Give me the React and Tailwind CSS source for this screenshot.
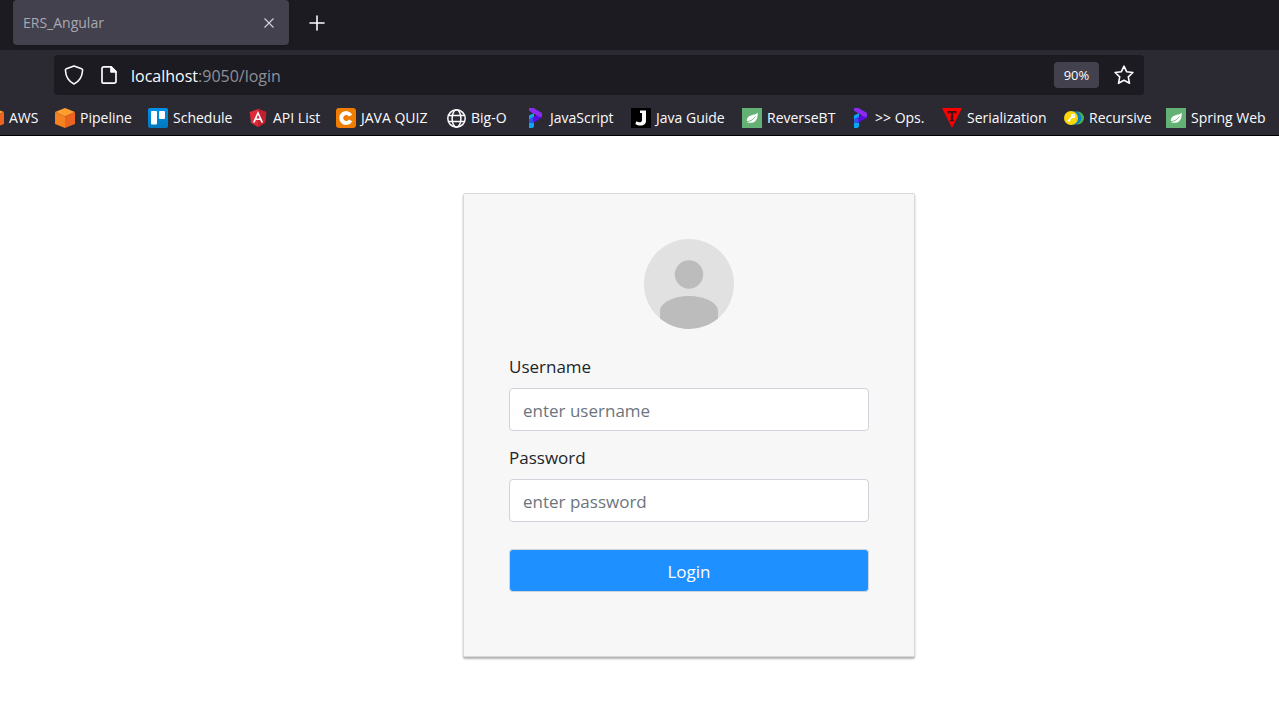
import React from "react";

function CubeIcon() {
  return (
    <svg viewBox="0 0 20 20" className="size-5 shrink-0" aria-hidden="true">
      <path d="M10 0 20 4 10 8.4 0 4Z" fill="#ff9d2e" />
      <path d="M0 4 10 8.4V20L0 16Z" fill="#f58220" />
      <path d="M20 4 10 8.4V20L20 16Z" fill="#ec6420" />
    </svg>
  );
}

function BoardIcon() {
  return (
    <svg viewBox="0 0 20 20" className="size-5 shrink-0" aria-hidden="true">
      <defs>
        <linearGradient id="board" x1="0" y1="0" x2="0" y2="1">
          <stop offset="0" stopColor="#0091e6" />
          <stop offset="1" stopColor="#0079bf" />
        </linearGradient>
      </defs>
      <rect width="20" height="20" rx="2" fill="url(#board)" />
      <rect x="3" y="3" width="6" height="13.5" rx="1" fill="#fff" />
      <rect x="11" y="3" width="6" height="8" rx="1" fill="#fff" />
    </svg>
  );
}

function AngularIcon() {
  return (
    <svg viewBox="0 0 20 20" className="size-5 shrink-0" aria-hidden="true">
      <path d="M10 1 18.3 4 17 15 10 19 3 15 1.7 4Z" fill="#dd2c3a" />
      <path d="M10 1 18.3 4 17 15 10 19Z" fill="#c3202f" />
      <path
        d="M10 3 4.8 14.6H6.8L7.8 12H12.2L13.2 14.6H15.2ZM10 6.6 11.5 10.4H8.5Z"
        fill="#fff"
        fillRule="evenodd"
      />
    </svg>
  );
}

function QuizIcon() {
  return (
    <svg viewBox="0 0 20 20" className="size-5 shrink-0" aria-hidden="true">
      <rect width="20" height="20" rx="3" fill="#f07c00" />
      <path
        d="M14.6 7.6A5 5 0 1 0 14.6 12.4"
        fill="none"
        stroke="#fff"
        strokeWidth="4"
      />
    </svg>
  );
}

function GlobeIcon() {
  return (
    <svg
      viewBox="0 0 20 20"
      className="size-5 shrink-0"
      fill="none"
      stroke="#fbfbfe"
      strokeWidth="1.5"
      aria-hidden="true"
    >
      <circle cx="10.5" cy="10.5" r="8.7" />
      <ellipse cx="10.5" cy="10.5" rx="4.4" ry="8.7" />
      <path d="M2.6 7.4H18.4M2.6 13.6H18.4" />
    </svg>
  );
}

function RibbonIcon() {
  return (
    <svg viewBox="0 0 20 20" className="size-5 shrink-0" aria-hidden="true">
      <path d="M4 7.5 9 5V18.500L7.500 20H4Z" fill="#0aa5f5" />
      <path d="M4 11.500 13 6.500 17 6V9.500L8.500 14.800 4 15Z" fill="#5a0be0" />
      <path d="M4 11.200V15L8.300 14.800V9.500Z" fill="#2f55e8" />
      <path d="M4 0H8.500L17 5V8.500L14.500 9 4 2.800Z" fill="#8a2cf0" />
    </svg>
  );
}

function HookIcon() {
  return (
    <svg viewBox="0 0 20 20" className="size-5 shrink-0" aria-hidden="true">
      <rect width="20" height="20" fill="#000" />
      <path
        d="M9 2.500H15V12.500C15 16 13 17.500 9.500 17.500 7 17.500 5.200 16.800 4.300 16L5.400 13.300C8 14.800 11 14.800 11 12V5H9Z"
        fill="#fff"
      />
    </svg>
  );
}

function LeafIcon() {
  return (
    <svg viewBox="0 0 20 20" className="size-5 shrink-0" aria-hidden="true">
      <rect width="20" height="20" fill="#63b175" />
      <path
        d="M15.600 4.600C16 8 15.200 11.500 13 13.500 10.800 15.300 7.500 15 5.300 14.400 4.500 12.500 4.700 10.300 6.500 8.700 9 6.600 13.600 7.500 15.600 4.600Z"
        fill="#fff"
      />
      <path d="M4.800 13.800C8.500 13.200 11.500 11.300 13.300 8.600" fill="none" stroke="#63b175" strokeWidth="0.900" />
    </svg>
  );
}

function TriangleIcon() {
  return (
    <svg viewBox="0 0 20 20" className="size-5 shrink-0" aria-hidden="true">
      <path d="M0 0H20L10 20Z" fill="#fe0000" />
      <path d="M5.500 3H14.500V5.800H13.200V4.800H11.200V12H12V13.200H8V12H8.800V4.800H6.800V5.800H5.500Z" fill="#3a1218" />
    </svg>
  );
}

function KeyIcon() {
  return (
    <svg viewBox="0 0 20 20" className="size-5 shrink-0" aria-hidden="true">
      <circle cx="13.500" cy="10" r="6.500" fill="#4caf50" />
      <circle cx="10.500" cy="10" r="6.700" fill="#0b7fc4" />
      <circle cx="7" cy="10" r="7" fill="#fbd60a" />
      <circle cx="9" cy="8" r="2.300" fill="#fff" />
      <path d="M8 9 3.800 13.200M5 12 6.200 13.200" stroke="#fff" strokeWidth="1.500" />
      <circle cx="9.600" cy="7.400" r="0.700" fill="#fbd60a" />
    </svg>
  );
}

const bookmarks = [
  { label: "AWS", Icon: CubeIcon, width: "w-[71px]" },
  { label: "Pipeline", Icon: CubeIcon, width: "w-[93px]" },
  { label: "Schedule", Icon: BoardIcon, width: "w-[100px]" },
  { label: "API List", Icon: AngularIcon, width: "w-[88px]" },
  { label: "JAVA QUIZ", Icon: QuizIcon, width: "w-[110px]" },
  { label: "Big-O", Icon: GlobeIcon, width: "w-[79px]" },
  { label: "JavaScript", Icon: RibbonIcon, width: "w-[106px]" },
  { label: "Java Guide", Icon: HookIcon, width: "w-[111px]" },
  { label: "ReverseBT", Icon: LeafIcon, width: "w-[108px]" },
  { label: ">> Ops.", Icon: RibbonIcon, width: "w-[92px]" },
  { label: "Serialization", Icon: TriangleIcon, width: "w-[122px]" },
  { label: "Recursive", Icon: KeyIcon, width: "w-[102px]" },
  { label: "Spring Web", Icon: LeafIcon, width: "w-[113px]" },
];

function TabStrip() {
  return (
    <div className="flex h-[50px] items-start bg-[#1c1b22] pl-[13px]">
      <div className="flex h-[45px] w-[276px] items-center justify-between rounded bg-[#42414d] pl-[10px] pr-3 shadow">
        <span className="text-sm text-[#a9a8b3]">ERS_Angular</span>
        <button type="button" aria-label="Close tab" className="flex size-4 items-center justify-center">
          <svg viewBox="0 0 10 10" className="size-[10px]" stroke="#d5d4dc" strokeWidth="1.100" aria-hidden="true">
            <path d="M0.500 0.500 9.500 9.500M9.500 0.500 0.500 9.500" />
          </svg>
        </button>
      </div>
      <button type="button" aria-label="New tab" className="ml-4 flex h-[45px] w-6 items-center justify-center">
        <svg viewBox="0 0 16 16" className="size-4" stroke="#fbfbfe" strokeWidth="1.600" strokeLinecap="round" aria-hidden="true">
          <path d="M8 1V15M1 8H15" />
        </svg>
      </button>
    </div>
  );
}

function AddressBar() {
  return (
    <div className="flex h-[50px] items-center pl-[54px] pr-[135px]">
      <div className="flex h-10 grow items-center rounded bg-[#1c1b22] pl-[10px] pr-[10px]">
        <svg viewBox="0 0 20 20" className="size-5 shrink-0" fill="none" stroke="#fbfbfe" strokeWidth="1.600" strokeLinejoin="round" aria-hidden="true">
          <path d="M10 0.900 17.600 3.700C18.400 4 18.700 4.500 18.600 5.300 18.200 11.500 15.500 16.500 10 19 4.500 16.500 1.800 11.500 1.400 5.300 1.300 4.500 1.600 4 2.400 3.700Z" />
        </svg>
        <svg viewBox="0 0 16 20" className="ml-[17px] h-5 w-4 shrink-0" fill="none" stroke="#fbfbfe" strokeWidth="1.700" strokeLinejoin="round" aria-hidden="true">
          <path d="M10 1.800H2.800A1.800 1.800 0 0 0 1 3.600V16.400A1.800 1.800 0 0 0 2.800 18.200H13.200A1.800 1.800 0 0 0 15 16.400V6.800Z" />
          <path d="M10 1.800V6.800H15Z" fill="#fbfbfe" />
        </svg>
        <div className="ml-[14px] grow pt-0.5 text-base text-[#8f8f98]">
          <span className="text-[#fbfbfe]">localhost</span>:9050/login
        </div>
        <button type="button" className="h-[26px] w-[45px] rounded-sm bg-[#42414d] pt-0.5 text-[13px] text-[#fbfbfe]">
          90%
        </button>
        <button type="button" aria-label="Bookmark this page" className="ml-[15px]">
          <svg viewBox="0 0 20 20" className="size-5" fill="none" stroke="#fbfbfe" strokeWidth="1.600" strokeLinejoin="round" aria-hidden="true">
            <path d="M10 1.200 12.600 6.700 18.900 7.500 14.300 11.800 15.500 18.300 10 15.200 4.500 18.300 5.700 11.800 1.100 7.500 7.400 6.700Z" />
          </svg>
        </button>
      </div>
    </div>
  );
}

function BookmarksBar() {
  return (
    <nav aria-label="Bookmarks" className="h-9 overflow-hidden border-b border-black">
      <ul className="-ml-4 flex h-9 items-center">
        {bookmarks.map(({ label, Icon, width }) => (
          <li key={label} className={`${width} shrink-0`}>
            <a href="#" className="flex items-center gap-[5px] whitespace-nowrap text-sm text-[#fbfbfe]">
              <Icon />
              {label}
            </a>
          </li>
        ))}
      </ul>
    </nav>
  );
}

function Avatar() {
  return (
    <svg viewBox="0 0 90 90" className="mx-auto size-[90px]" role="img" aria-label="Profile">
      <defs>
        <clipPath id="avatar">
          <circle cx="45" cy="45" r="45" />
        </clipPath>
      </defs>
      <circle cx="45" cy="45" r="45" fill="#e1e1e1" />
      <g clipPath="url(#avatar)" fill="#bcbcbc">
        <circle cx="45" cy="35.500" r="14.200" />
        <path d="M16 90V72C16 64 29 57 45 57S74 64 74 72V90Z" />
      </g>
    </svg>
  );
}

function Field({ id, label, ...props }) {
  return (
    <div className="mb-[14px]">
      <label htmlFor={id} className="mb-[9px] block text-[17px] leading-[25px] text-[#212529]">
        {label}
      </label>
      <input
        id={id}
        className="block h-[43px] w-full rounded border border-[#ced4da] bg-white px-[13px] pt-0.5 text-[17px] text-[#212529] placeholder:text-[#6c757d]"
        {...props}
      />
    </div>
  );
}

export default function App() {
  return (
    <div className="min-h-screen bg-white font-['Open_Sans','Noto_Sans',sans-serif]">
      <header className="bg-[#2b2a33]">
        <TabStrip />
        <AddressBar />
        <BookmarksBar />
      </header>
      <main className="flex justify-center pb-16 pl-[99px] pt-[57px]">
        <form
          className="w-[452px] rounded-xs border border-[#d9d9d9] bg-[#f7f7f7] px-[45px] pb-16 pt-[45px] shadow-[0_2px_2px_rgba(0,0,0,0.3)]"
          onSubmit={(event) => event.preventDefault()}
        >
          <div className="mb-[25px]">
            <Avatar />
          </div>
          <Field id="username" label="Username" type="text" placeholder="enter username" />
          <Field id="password" label="Password" type="password" placeholder="enter password" />
          <button
            type="submit"
            className="mt-[13px] h-[43px] w-full rounded border border-[#ced4da] bg-[#1e90ff] pt-0.5 text-[17px] text-white"
          >
            Login
          </button>
        </form>
      </main>
    </div>
  );
}
